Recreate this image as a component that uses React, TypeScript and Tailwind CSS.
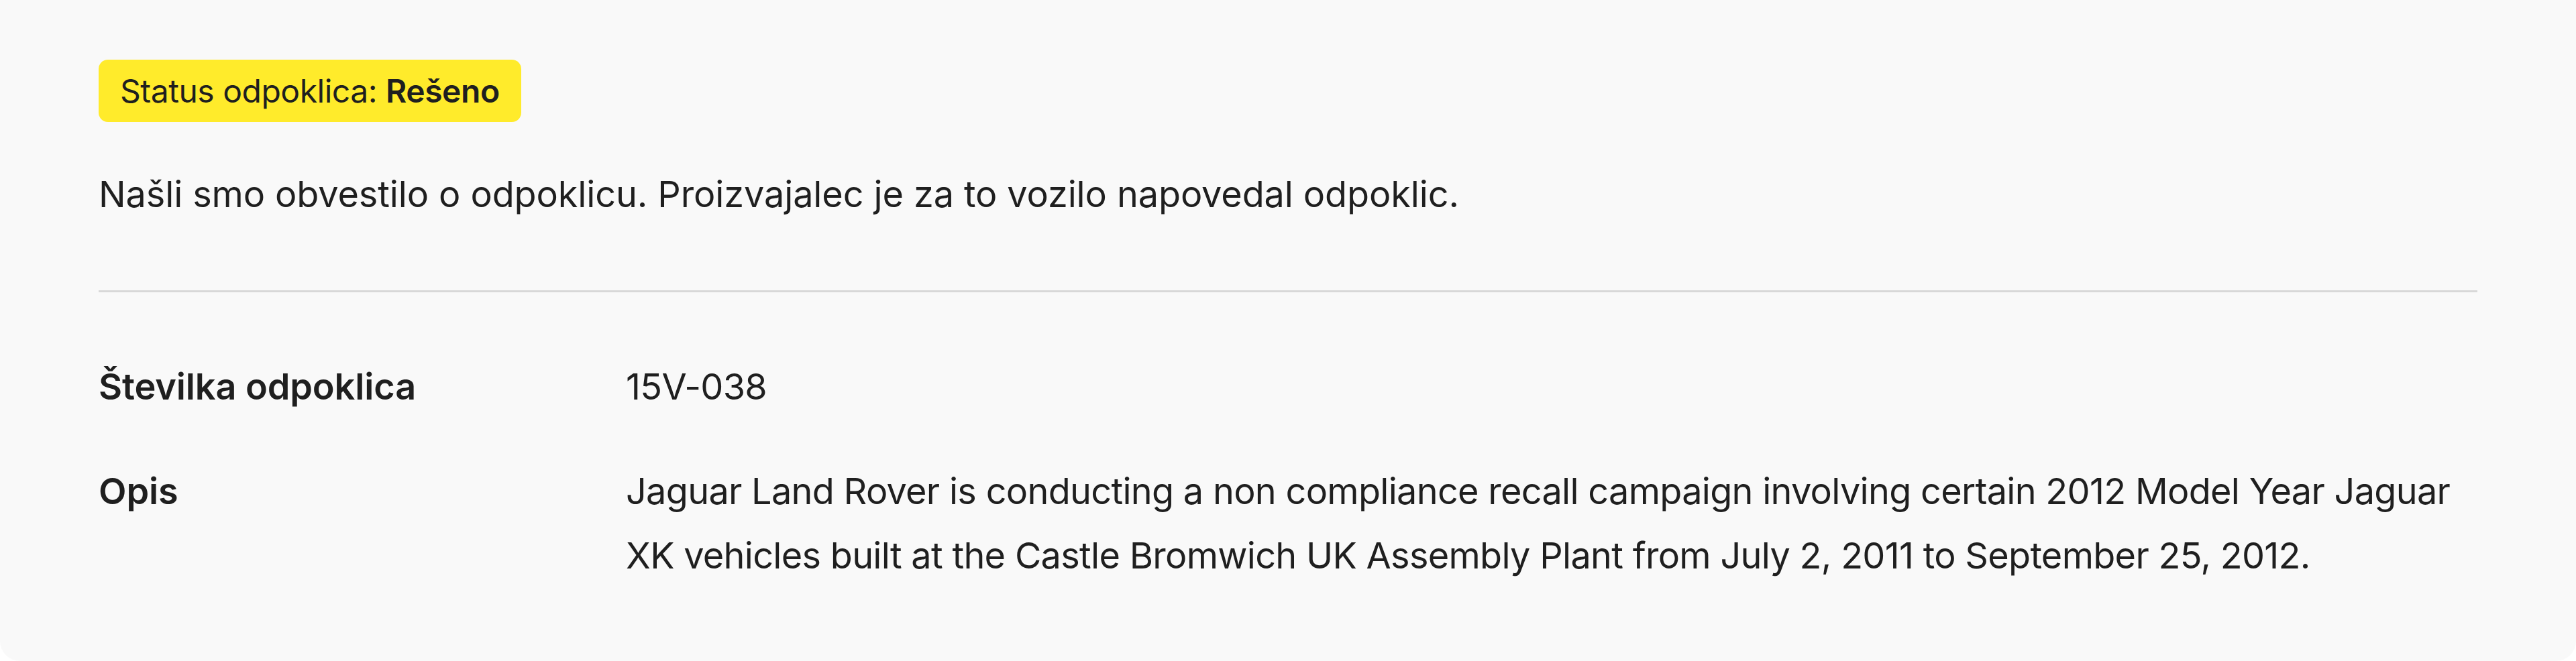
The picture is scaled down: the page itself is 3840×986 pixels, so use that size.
const rows = [
  { label: 'Številka odpoklica', value: '15V-038' },
  {
    label: 'Opis',
    value:
      'Jaguar Land Rover is conducting a non compliance recall campaign involving certain 2012 Model Year Jaguar XK vehicles built at the Castle Bromwich UK Assembly Plant from July 2, 2011 to September 25, 2012.',
  },
]

export default function App() {
  return (
    <div className="min-h-[986px] bg-white font-['Inter',sans-serif] tracking-[-0.007em] text-[#1f1f1f]">
      <section className="h-[986px] rounded-b-[30px] bg-[#f9f9f9] px-[147px] pt-[89px]">
        <div className="inline-flex h-[93px] items-center rounded-[14px] bg-[#ffeb2b] px-[32px] text-[48px] tracking-[-0.01em]">
          <span>
            Status odpoklica: <b className="font-semibold">Rešeno</b>
          </span>
        </div>
        <p className="mt-[60px] text-[54px] leading-[96px]">
          Našli smo obvestilo o odpoklicu. Proizvajalec je za to vozilo napovedal odpoklic.
        </p>
        <div className="mt-[95px] h-[3px] bg-[#d8d8d8]" />
        <dl className="mt-[93px] flex flex-col gap-[60px]">
          {rows.map((row) => (
            <div key={row.label} className="grid grid-cols-[786px_1fr] text-[54px] leading-[96px]">
              <dt className="font-semibold">{row.label}</dt>
              <dd className="tracking-[-0.013em]">{row.value}</dd>
            </div>
          ))}
        </dl>
      </section>
    </div>
  )
}
